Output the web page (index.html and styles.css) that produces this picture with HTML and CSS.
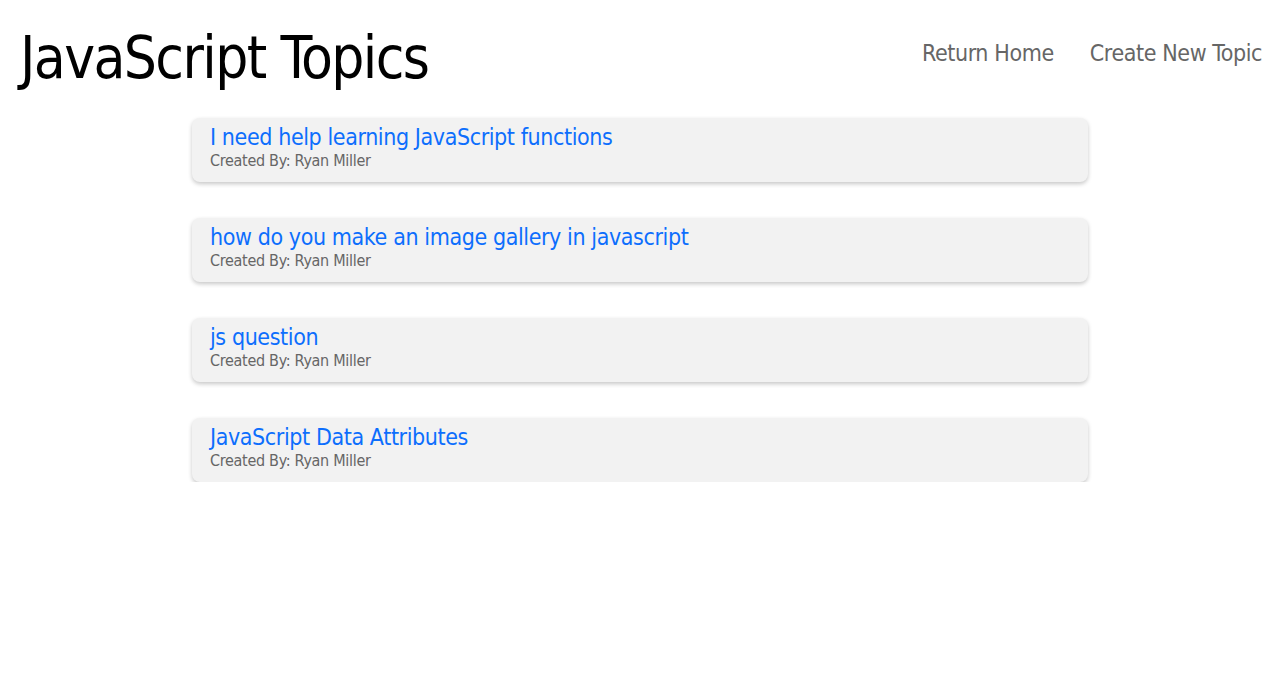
FILE: index.html
```html
<!DOCTYPE html>
<html>
<head>
<meta charset="utf-8">
<link rel="stylesheet" href="styles.css">
</head>
<body>
<header class="header">
  <h1 class="title">JavaScript Topics</h1>
  <nav class="nav">
    <a class="nav-link" href="#">Return Home</a>
    <a class="nav-link" href="#">Create New Topic</a>
  </nav>
</header>
<main class="topics">
  <div class="card">
    <a class="card-title" href="#">I need help learning JavaScript functions</a>
    <div class="card-meta">Created By: Ryan Miller</div>
  </div>
  <div class="card">
    <a class="card-title" href="#">how do you make an image gallery in javascript</a>
    <div class="card-meta">Created By: Ryan Miller</div>
  </div>
  <div class="card">
    <a class="card-title" href="#">js question</a>
    <div class="card-meta">Created By: Ryan Miller</div>
  </div>
  <div class="card">
    <a class="card-title" href="#">JavaScript Data Attributes</a>
    <div class="card-meta">Created By: Ryan Miller</div>
  </div>
</main>
</body>
</html>
```

FILE: styles.css
```css
html, body {
  margin: 0;
  padding: 0;
  background: #fff;
}
body {
  font-family: "DejaVu Sans Condensed", "Liberation Sans", sans-serif;
}
.header {
  display: flex;
  justify-content: space-between;
  align-items: flex-start;
  padding: 20px 18px 0 20px;
}
.title {
  margin: 0;
  font-weight: normal;
  font-size: 58px;
  line-height: 76px;
  letter-spacing: -1.6px;
  color: #000;
}
.nav {
  display: flex;
  gap: 36px;
  padding-top: 20px;
}
.nav-link {
  font-size: 23px;
  letter-spacing: -0.4px;
  color: #666;
  text-decoration: none;
}
.topics {
  width: 896px;
  margin: 22px auto 0;
  display: flex;
  flex-direction: column;
  gap: 36px;
}
.card {
  background: #f2f2f2;
  border-radius: 8px;
  box-shadow: 0 2px 4px rgba(0,0,0,0.22);
  height: 64px;
  box-sizing: border-box;
  padding: 5px 18px;
  display: flex;
  flex-direction: column;
}
.card-title {
  font-size: 23px;
  line-height: 28px;
  letter-spacing: -0.4px;
  color: #0d6efd;
  text-decoration: none;
}
.card-meta {
  font-size: 16px;
  line-height: 20px;
  letter-spacing: -0.3px;
  color: #666;
}
```
